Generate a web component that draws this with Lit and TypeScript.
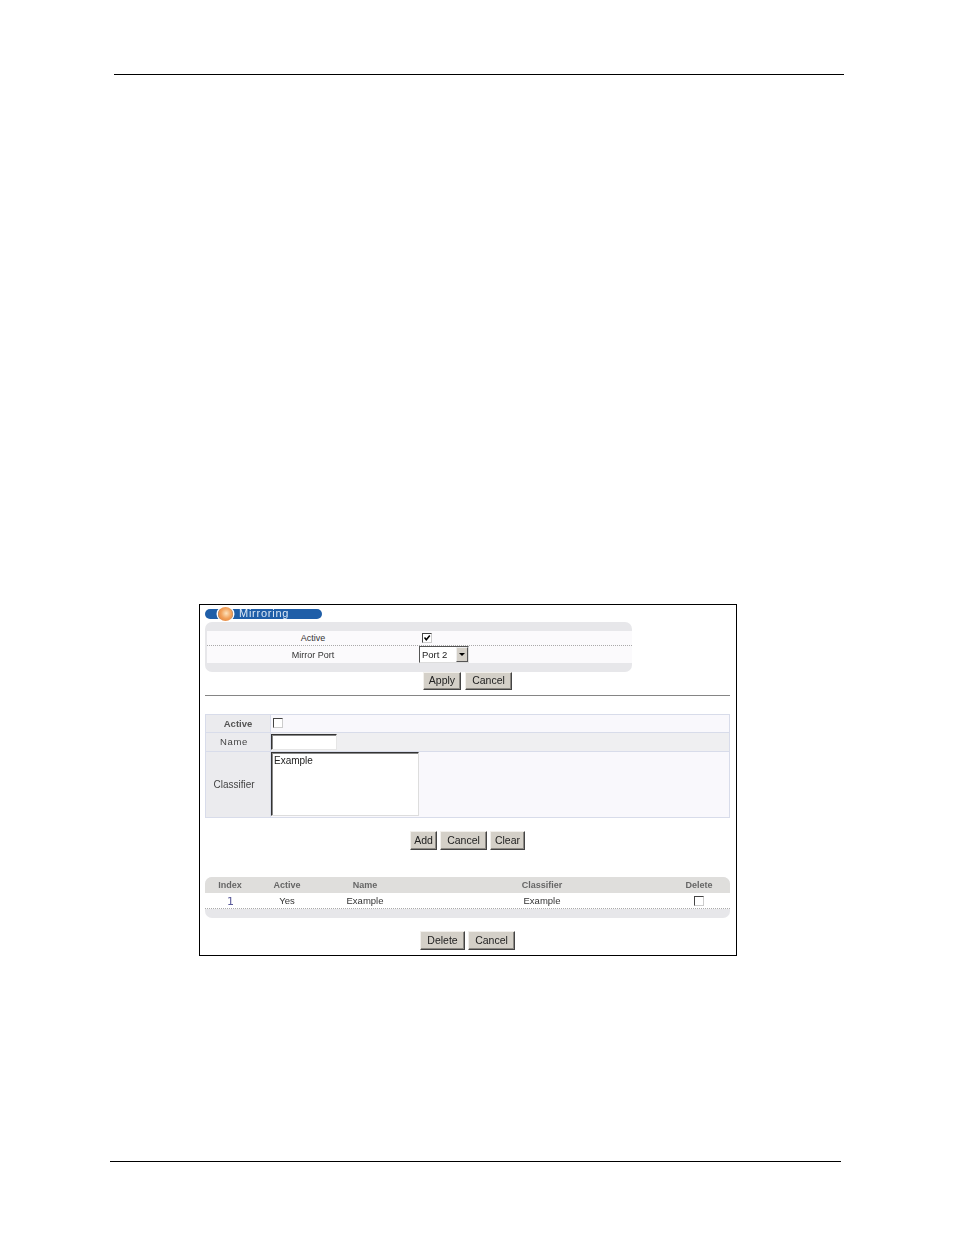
import { LitElement, html, css } from "lit";
import { customElement } from "lit/decorators.js";

@customElement("app-root")
export class AppRoot extends LitElement {
  static styles = css`
    :host { display: block; width: 954px; height: 1235px; background: #fff; font-family: "Liberation Sans", Arial, sans-serif; font-size: 9.5px; color: #333; overflow: hidden; }
    .page { display: flex; flex-direction: column; padding-top: 74px; }
    .rule { height: 1px; background: #000; }
    .rule.top { margin-left: 114px; width: 730px; }
    .rule.bottom { margin-left: 110px; width: 731px; margin-top: 205px; }
    .frame { box-sizing: border-box; margin: 529px 0 0 199px; width: 538px; height: 352px; border: 1px solid #000; padding: 4px 6px 0 5px; display: flex; flex-direction: column; }
    .frame > * { filter: blur(0.3px); }
    .title { box-sizing: border-box; width: 117px; height: 10px; border-radius: 5px; background: #1f5ea8; color: #dbe8f6; display: flex; align-items: center; font-size: 11px; letter-spacing: 0.75px; padding: 0 0 2px 34px; position: relative; line-height: 9px; }
    .orb { position: absolute; left: 13px; top: -2px; width: 15px; height: 14px; border-radius: 50%; background: radial-gradient(circle at 55% 45%, #fde3bd 0, #f2a25c 45%, #d9772f 100%); box-shadow: 0 0 0 1.5px #fff; }
    .panel { margin-top: 3px; width: 427px; height: 50px; box-sizing: border-box; background: #e7e7ea; border-radius: 7px; padding: 9px 0 9px 2px; font-size: 9px; }
    .panel-inner { background: #fbfafc; height: 32px; display: flex; flex-direction: column; }
    .prow { display: grid; grid-template-columns: 212px 1fr; align-items: center; }
    .prow.a { height: 14px; border-bottom: 1px dotted #aaa; }
    .prow.a .ctl { padding-left: 3px; }
    .prow.b { height: 17px; }
    .prow > .lbl { text-align: center; }
    .prow > .ctl { display: flex; align-items: center; }
    .check { box-sizing: border-box; width: 10px; height: 10px; border: 1px solid; border-color: #444 #ccc #ccc #444; background: #fff; display: block; flex: none; }
    .check svg { display: block; }
    .select { box-sizing: border-box; width: 50px; height: 17px; border: 1px solid; border-color: #555 #ddd #ddd #555; background: #fff; display: flex; align-items: center; justify-content: space-between; padding-left: 2px; color: #222; font-size: 9.5px; }
    .arrow { box-sizing: border-box; width: 12px; height: 15px; background: #d4d0c8; border: 1px solid; border-color: #eee #555 #555 #eee; display: flex; align-items: center; justify-content: center; }
    .arrow i { width: 0; height: 0; border: 3px solid transparent; border-top: 3px solid #000; border-bottom: 0; }
    .btn { box-sizing: border-box; height: 19px; padding-bottom: 2px; background: #d4d0c8; border: 1px solid; border-color: #f2f0ec #444 #444 #f2f0ec; box-shadow: inset -1px -1px 0 #8d8a84; color: #222; display: flex; align-items: center; justify-content: center; font-size: 10.5px; flex: none; }
    .btns { display: flex; }
    .btns.one { margin: 0 0 0 218px; gap: 4px; }
    .btns.one .btn { height: 18px; }
    .hr { height: 1px; background: #858585; margin-top: 5px; }
    .form { margin-top: 18px; box-sizing: border-box; height: 104px; border: 1px solid #d8dcea; display: flex; flex-direction: column; background: #d8dcea; gap: 1px; }
    .frow { display: grid; grid-template-columns: 64px 1fr; gap: 1px; }
    .frow .k { background: #ebebee; display: flex; align-items: center; justify-content: center; color: #444; }
    .frow .k.bold { font-weight: bold; color: #555; }
    .frow .k.name { letter-spacing: 0.7px; padding-right: 8px; }
    .frow .k.cls { font-size: 10px; padding-right: 8px; }
    .frow .v { display: flex; align-items: center; }
    .f1 { height: 17px; }
    .f1 .v { background: #f9f8fc; padding-left: 2px; }
    .f2 { height: 18px; }
    .f2 .v { background: #efeff1; }
    .f3 { height: 66px; }
    .f3 .v { background: #f9f8fc; }
    .input { box-sizing: border-box; width: 66px; height: 16px; border: 1px solid; border-color: #333 #e6e6e6 #e6e6e6 #333; box-shadow: inset 1px 1px 0 #888; background: #fff; }
    .area { box-sizing: border-box; width: 148px; height: 64px; border: 1px solid; border-color: #333 #ddd #ddd #333; box-shadow: inset 1px 1px 0 #888; background: #fff; padding: 2px 2px; color: #222; font-size: 10px; line-height: 11px; }
    .btns.two { margin: 13px 0 0 205px; gap: 3px; }
    .list { margin-top: 27px; height: 41px; border-radius: 7px; overflow: hidden; background: #e7e7ea; display: flex; flex-direction: column; }
    .lgrid { display: grid; grid-template-columns: 50px 64px 92px 262px 52px; align-items: center; }
    .lgrid > span { text-align: center; }
    .lhead { height: 16px; background: #dfdedc; color: #666; font-weight: bold; font-size: 9px; }
    .lrow { height: 15px; background: #fff; border-bottom: 1px dotted #aaa; }
    .lrow .n { color: #5a5a9a; font-size: 11px; font-family: "DejaVu Sans", sans-serif; padding: 2px 0 0 1px; }
    .lrow .cb { display: flex; justify-content: center; }
    .btns.three { margin: 13px 0 0 215px; gap: 3px; }
  `;

  render() {
    return html`<div class="page">
      <div class="rule top"></div>
      <div class="frame">
        <div class="title"><span class="orb"></span>Mirroring</div>
        <div class="panel"><div class="panel-inner">
          <div class="prow a"><span class="lbl">Active</span><span class="ctl">
            <span class="check"><svg width="8" height="8" viewBox="0 0 8 8"><path d="M1.5 3.5 L3.3 5.8 L6.8 1.5" fill="none" stroke="#000" stroke-width="1.5"/></svg></span>
          </span></div>
          <div class="prow b"><span class="lbl">Mirror Port</span><span class="ctl">
            <span class="select">Port 2<span class="arrow"><i></i></span></span>
          </span></div>
        </div></div>
        <div class="btns one">
          <span class="btn" style="width:38px">Apply</span>
          <span class="btn" style="width:47px">Cancel</span>
        </div>
        <div class="hr"></div>
        <div class="form">
          <div class="frow f1"><span class="k bold">Active</span><span class="v"><span class="check"></span></span></div>
          <div class="frow f2"><span class="k name">Name</span><span class="v"><span class="input"></span></span></div>
          <div class="frow f3"><span class="k cls">Classifier</span><span class="v"><span class="area">Example</span></span></div>
        </div>
        <div class="btns two">
          <span class="btn" style="width:27px">Add</span>
          <span class="btn" style="width:47px">Cancel</span>
          <span class="btn" style="width:35px">Clear</span>
        </div>
        <div class="list">
          <div class="lgrid lhead"><span>Index</span><span>Active</span><span>Name</span><span>Classifier</span><span>Delete</span></div>
          <div class="lgrid lrow"><span class="n">1</span><span>Yes</span><span>Example</span><span>Example</span><span class="cb"><span class="check"></span></span></div>
        </div>
        <div class="btns three">
          <span class="btn" style="width:45px">Delete</span>
          <span class="btn" style="width:47px">Cancel</span>
        </div>
      </div>
      <div class="rule bottom"></div>
    </div>`;
  }
}
